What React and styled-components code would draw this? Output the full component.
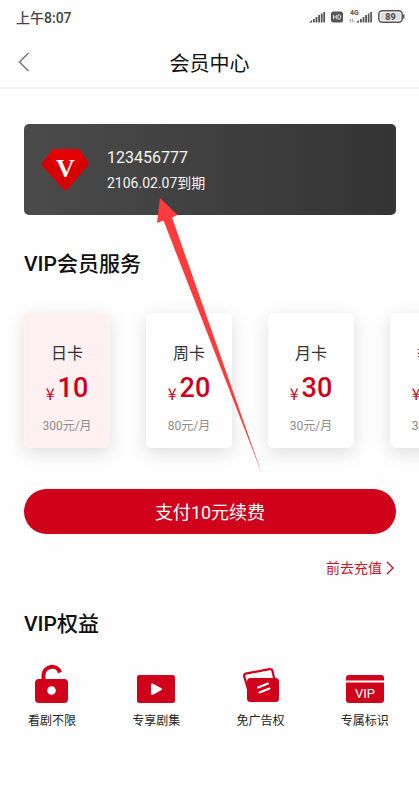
import React, { useState } from "react";
import styled, { createGlobalStyle } from "styled-components";

const GlobalStyle = createGlobalStyle`
  * {
    box-sizing: border-box;
  }
  body {
    margin: 0;
    background-color: #fefefe;
    color: #111;
    font-family: Roboto, "Noto Sans CJK SC", sans-serif;
  }
  button {
    border: none;
    background: none;
    padding: 0;
    font-family: inherit;
    cursor: pointer;
  }
  h1, h2, p {
    margin: 0;
  }
  svg {
    display: block;
  }
`;

const Page = styled.div`
  position: relative;
  overflow: hidden;
  padding-bottom: 60px;
`;

const StatusBar = styled.div`
  display: flex;
  align-items: center;
  justify-content: space-between;
  height: 36px;
  padding: 0 14px 3px 16px;
  font-size: 14px;
  font-weight: 500;
  color: #444;
`;

const StatusIcons = styled.div`
  display: flex;
  align-items: center;
  gap: 6px;
`;

const Header = styled.header`
  display: grid;
  grid-template-columns: 48px 1fr 48px;
  align-items: center;
  height: 53px;
  border-bottom: 2px solid #f3f3f3;
  h1 {
    font-size: 20px;
    line-height: 28px;
    font-weight: 400;
    text-align: center;
    padding-top: 5px;
  }
`;

const BackButton = styled.button`
  display: flex;
  justify-content: center;
`;

const Content = styled.main`
  padding: 35px 23px 0 24px;
`;

const MemberCard = styled.section`
  display: flex;
  align-items: center;
  gap: 18px;
  height: 91px;
  padding: 0 18px;
  border-radius: 5px;
  background: linear-gradient(90deg, #4b4b4b, #343434);
  color: #f4f4f4;
`;

const MemberInfo = styled.div`
  padding-top: 1px;
`;

const MemberName = styled.p`
  font-size: 16px;
  line-height: 26px;
`;

const MemberExpiry = styled.p`
  font-size: 14px;
  line-height: 24px;
`;

const SectionTitle = styled.h2`
  font-size: 21px;
  line-height: 28px;
  font-weight: 500;
  color: #111;
`;

const ServiceTitle = styled(SectionTitle)`
  margin-top: 35px;
`;

const RightsTitle = styled(SectionTitle)`
  margin-top: 32px;
`;

const PlanList = styled.div`
  display: flex;
  gap: 36px;
  margin: 0 -23px 0 -24px;
  padding: 35px 24px 41px;
  overflow-x: auto;
  scrollbar-width: none;
`;

const Plan = styled.button`
  display: flex;
  flex: none;
  flex-direction: column;
  align-items: center;
  width: 86px;
  height: 135px;
  padding-top: 29px;
  border-radius: 5px;
  background-color: ${(props) => (props.$active ? "#fff1f1" : "#fff")};
  box-shadow: 0 5px 18px rgba(0, 0, 0, 0.13);
`;

const PlanName = styled.span`
  font-size: 16px;
  line-height: 24px;
  color: #333;
`;

const PlanPrice = styled.span`
  display: flex;
  align-items: flex-end;
  gap: 3px;
  margin-top: 4px;
  font-size: 27px;
  line-height: 36px;
  font-weight: 500;
  color: #d0021b;
  small {
    padding-bottom: 1px;
    font-family: "Noto Sans CJK JP", sans-serif;
    font-size: 16px;
    font-weight: 400;
    line-height: 24px;
  }
`;

const PlanUnit = styled.span`
  margin-top: 10px;
  font-size: 12px;
  line-height: 20px;
  color: #8c8c8c;
`;

const PayButton = styled.button`
  width: 100%;
  height: 45px;
  padding-top: 2px;
  border-radius: 23px;
  background-color: #d0021b;
  color: #fff;
  font-size: 18px;
  line-height: 24px;
`;

const RechargeLink = styled.a`
  display: flex;
  align-items: center;
  gap: 4px;
  width: fit-content;
  margin: 24px 2px 0 auto;
  font-size: 14px;
  line-height: 20px;
  color: #c8142c;
  text-decoration: none;
`;

const RightsList = styled.div`
  display: grid;
  grid-template-columns: repeat(4, 1fr);
  padding: 26px 2px 0 0;
`;

const Right = styled.div`
  display: flex;
  flex-direction: column;
  align-items: center;
  gap: 9px;
  font-size: 12px;
  line-height: 18px;
  color: #222;
`;

const Arrow = styled.svg`
  position: absolute;
  top: 198px;
  left: 157px;
  pointer-events: none;
`;

const Signal = () => (
  <svg width="16" height="12" viewBox="0 0 16 12" fill="#555">
    <path d="M0 11.5 3 9v2.5zM4 8h1.8v3.5H4zM6.6 6h1.8v5.5H6.6zM9.200 4H11v7.500H9.200zM11.800 2.500h1.800v9h-1.800zM14.300 1H16v10.500h-1.700z" />
  </svg>
);

const HdBadge = () => (
  <svg width="12" height="12" viewBox="0 0 12 12">
    <rect width="12" height="11" y="0.5" rx="2.500" fill="#555" />
    <path
      d="M2.500 3.800v4.400M5.300 3.800v4.400M2.500 6h2.800M7 3.800v4.400h1.200q1.500 0 1.500-2.200T8.200 3.800z"
      fill="none"
      stroke="#eee"
      strokeWidth="0.9"
    />
  </svg>
);

const SignalFourG = () => (
  <svg width="23" height="16" viewBox="0 0 23 16" fill="#555">
    <text x="1" y="6" fontSize="7" fontWeight="700">
      4G
    </text>
    <path d="M7 13.500 10 11v2.500zM11 10h1.800v3.500H11zM13.600 8h1.800v5.500h-1.800zM16.200 6H18v7.500h-1.800zM18.800 4.500h1.700v9h-1.700zM21.300 3H23v10.500h-1.700z" />
    <path d="M1.500 13.500V10L0 11.500M3.500 9.500V13L5 11.500" fill="none" stroke="#999" strokeWidth="0.8" />
  </svg>
);

const Battery = () => (
  <svg width="27" height="13" viewBox="0 0 27 13">
    <rect x="0.8" y="0.8" width="23.400" height="11.400" rx="3.500" fill="none" stroke="#555" strokeWidth="1.500" />
    <rect x="2.500" y="2.500" width="20" height="8" rx="2" fill="#ddd" />
    <path d="M25.800 4.500v4" stroke="#555" strokeWidth="1.400" />
    <text x="12.500" y="10" textAnchor="middle" fontSize="9" fontWeight="700" fill="#444">
      89
    </text>
  </svg>
);

const Diamond = () => (
  <svg width="47" height="42" viewBox="0 0 47 42">
    <path d="M13 0h22q1.500 0 2.500 1L46 12.500q1.500 2-.5 4.500L25 41q-1.500 1.500-3 0L1 18q-2-2.500-.5-5L10.500 1Q11.500 0 13 0z" fill="#d80205" />
    <path d="M13 0h22q1.500 0 2.500 1L41 6l-7 12H13L6 6.500 10.500 1Q11.500 0 13 0z" fill="#e40206" />
    <path d="M0 15 6 6.500 13 18 1 18zM47 15 41 6 34 18H45z" fill="#d00205" />
    <path d="M13 18h21L23.500 42z" fill="#d20002" />
    <text x="23.500" y="28" textAnchor="middle" fontFamily="Liberation Serif, serif" fontSize="26" fontWeight="700" fill="#fff">
      V
    </text>
  </svg>
);

const LockIcon = () => (
  <svg width="34" height="39" viewBox="0 0 34 39">
    <path d="M8.500 18V11a8.500 8.500 0 0 1 16.500-2.500" fill="none" stroke="#d0021b" strokeWidth="4" />
    <rect y="15" width="33" height="24" rx="4" fill="#d0021b" />
    <circle cx="16.500" cy="26.500" r="4.300" fill="#fff" />
  </svg>
);

const VideoIcon = () => (
  <svg width="38" height="39" viewBox="0 0 38 39">
    <rect y="11" width="38" height="28" rx="2.500" fill="#d0021b" />
    <path d="M15 20.500v9.500l9-4.800z" fill="#fff" stroke="#fff" strokeWidth="2" strokeLinejoin="round" />
  </svg>
);

const CardsIcon = () => (
  <svg width="36" height="39" viewBox="0 0 36 39">
    <path
      d="M5.500 27 1.200 12.500q-.6-2.200 1.500-2.900L26.500 5.200q2.300-.5 2.900 1.500L32 18"
      fill="none"
      stroke="#d0021b"
      strokeWidth="2.200"
    />
    <rect x="4" y="14" width="32" height="24" rx="3.500" fill="#d0021b" />
    <path d="m15 23.500 10-4M16.500 28.500l10-4" stroke="#fff" strokeWidth="2" strokeLinecap="round" />
  </svg>
);

const VipIcon = () => (
  <svg width="38" height="39" viewBox="0 0 38 39">
    <path d="M0 16.500V14q0-3 3-3h32q3 0 3 3v2.500zM0 18.500h38V36q0 3-3 3H3q-3 0-3-3z" fill="#d0021b" />
    <text x="19" y="33.500" textAnchor="middle" fontSize="13" fill="#fff">
      VIP
    </text>
  </svg>
);

const plans = [
  { id: 1, name: "日卡", price: 10, unit: "300元/月" },
  { id: 2, name: "周卡", price: 20, unit: "80元/月" },
  { id: 3, name: "月卡", price: 30, unit: "30元/月" },
  { id: 4, name: "季卡", price: 90, unit: "30元/月" },
];

const rights = [
  { name: "看剧不限", Icon: LockIcon },
  { name: "专享剧集", Icon: VideoIcon },
  { name: "免广告权", Icon: CardsIcon },
  { name: "专属标识", Icon: VipIcon },
];

const App = () => {
  const [selected, setSelected] = useState(plans[0]);

  return (
    <Page>
      <GlobalStyle />
      <StatusBar>
        <span>上午8:07</span>
        <StatusIcons>
          <Signal />
          <HdBadge />
          <SignalFourG />
          <Battery />
        </StatusIcons>
      </StatusBar>

      <Header>
        <BackButton aria-label="返回">
          <svg width="12" height="20" viewBox="0 0 12 20" fill="none" stroke="#777" strokeWidth="1.500">
            <path d="M10.500 1 1.500 10l9 9" />
          </svg>
        </BackButton>
        <h1>会员中心</h1>
      </Header>

      <Content>
        <MemberCard>
          <Diamond />
          <MemberInfo>
            <MemberName>123456777</MemberName>
            <MemberExpiry>2106.02.07到期</MemberExpiry>
          </MemberInfo>
        </MemberCard>

        <ServiceTitle>VIP会员服务</ServiceTitle>
        <PlanList>
          {plans.map((plan) => (
            <Plan key={plan.id} $active={plan.id === selected.id} onClick={() => setSelected(plan)}>
              <PlanName>{plan.name}</PlanName>
              <PlanPrice>
                <small>¥</small>
                {plan.price}
              </PlanPrice>
              <PlanUnit>{plan.unit}</PlanUnit>
            </Plan>
          ))}
        </PlanList>

        <PayButton>支付{selected.price}元续费</PayButton>
        <RechargeLink href="#recharge">
          前去充值
          <svg width="8" height="14" viewBox="0 0 8 14" fill="none" stroke="#c8142c" strokeWidth="1.400">
            <path d="m1 1 6 6-6 6" />
          </svg>
        </RechargeLink>

        <RightsTitle>VIP权益</RightsTitle>
      </Content>

      <RightsList>
        {rights.map(({ name, Icon }) => (
          <Right key={name}>
            <Icon />
            {name}
          </Right>
        ))}
      </RightsList>

      <Arrow width="105" height="277" viewBox="0 0 105 277" fill="#ff3b3b">
        <path d="M3 0 20.500 17 15 19.500 105 276 6.500 22.500 0 25z" />
      </Arrow>
    </Page>
  );
};

export default App;
